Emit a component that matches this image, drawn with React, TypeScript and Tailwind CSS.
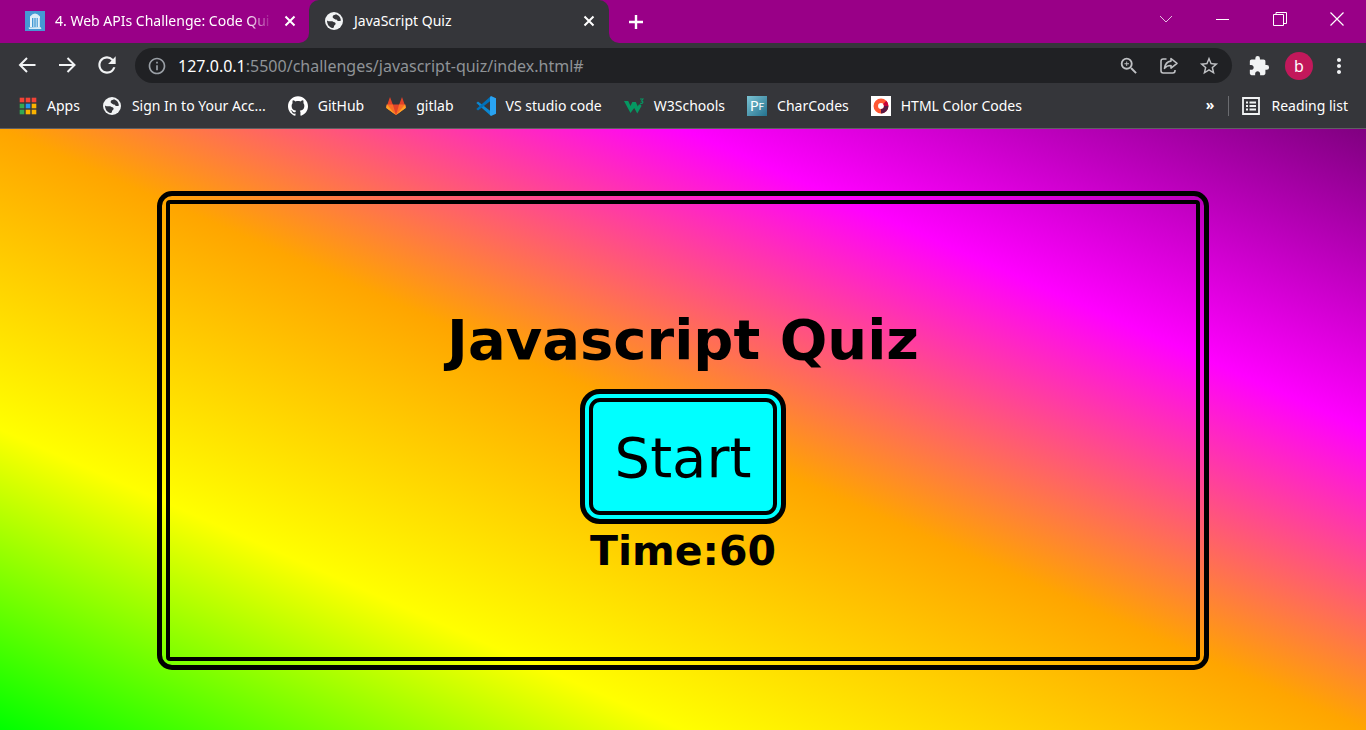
import React from 'react';
import { SiGithub } from 'react-icons/si';
import { MdExtension, MdMoreVert, MdStarBorder, MdRefresh, MdInfoOutline, MdZoomIn } from 'react-icons/md';

function Globe({ className }: { className?: string }) {
  return (
    <svg viewBox="0 0 20 20" className={className} aria-hidden="true">
      <circle cx="10" cy="10" r="9" fill="#f1f3f4" />
      <path d="M3 9.500C5 11 8 9.500 9.500 11c1.500 0 2.500 1 2 2.300-.3 1-1.500 1-1.500 2.200 0 .8-.5 1.500-1.500 1.500C5 16.500 3 13 3 9.500z" fill="#35363a" />
      <path d="M12 3.200c-1 1-2.500.5-3 1.500s-.5 2 .5 2.500 1.500 1.500 3 1.300c1 1.500 2 2 4.300 1.200C17 6.500 14.500 4 12 3.200z" fill="#35363a" />
    </svg>
  );
}

function CloseX({ className }: { className?: string }) {
  return (
    <svg viewBox="0 0 12 12" className={className} aria-hidden="true">
      <path d="M1.500 1.500l9 9M10.500 1.500l-9 9" stroke="#fff" strokeWidth="2" />
    </svg>
  );
}

function Bookmark({ icon, label }: { icon: React.ReactNode; label: string }) {
  return (
    <a href="#" className="flex shrink-0 items-center gap-[10px] whitespace-nowrap">
      {icon}
      <span>{label}</span>
    </a>
  );
}

const appColors = ['#f44336', '#f44336', '#f44336', '#34a853', '#2196f3', '#fbb300', '#34a853', '#fbb300', '#fbb300'];

function AppsIcon() {
  return (
    <svg viewBox="0 0 18 18" className="size-[18px]" aria-hidden="true">
      {appColors.map((c, i) => (
        <rect key={i} x={0.7 + (i % 3) * 6} y={0.7 + Math.floor(i / 3) * 6} width="4.6" height="4.6" fill={c} />
      ))}
    </svg>
  );
}

export default function App() {
  return (
    <div className="flex min-h-screen flex-col font-['Noto_Sans','Open_Sans',sans-serif] text-[14px] leading-5 text-white">
      <header className="bg-[#35363a]">
        <div className="flex h-[43px] bg-[#35363a]">
          <div className="flex w-[309px] items-center rounded-br-[10px] bg-[#990087] pb-[2px] pl-[25px]">
            <svg viewBox="0 0 20 20" className="size-5 shrink-0" aria-hidden="true">
              <rect width="20" height="20" fill="#4599d4" />
              <path d="M5 5.500Q10-.5 15 5.500V7H5zM3.500 16.500l12-.5 1 2H4z" fill="#d9ecf7" />
              <path d="M6 6.500V16M13.800 6.500V16" stroke="#e8f3fa" strokeWidth="2" />
              <path d="M8.800 7v9M11.200 7v9" stroke="#b9dcf1" strokeWidth="1.2" />
            </svg>
            <span className="ml-[10px] w-[218px] overflow-hidden whitespace-nowrap [mask-image:linear-gradient(to_right,black_88%,transparent)]">4. Web APIs Challenge: Code Qui</span>
            <button aria-label="Close first tab" className="ml-[11px]"><CloseX className="size-3" /></button>
          </div>
          <div className="flex w-[300px] bg-[#990087]">
            <div className="flex grow items-center rounded-t-[10px] bg-[#35363a] pb-[2px] pl-[15px]">
              <Globe className="size-5" />
              <span className="ml-[10px] grow">JavaScript Quiz</span>
              <button aria-label="Close tab" className="mr-[14px]"><CloseX className="size-3" /></button>
            </div>
          </div>
          <div className="flex grow rounded-bl-[10px] bg-[#990087]">
            <button aria-label="New tab" className="ml-[19px]">
              <svg viewBox="0 0 16 16" className="size-4" aria-hidden="true"><path d="M8 1v14M1 8h14" stroke="#fff" strokeWidth="2.4" /></svg>
            </button>
            <div className="ml-auto flex items-center gap-[43px] pr-[22px] pb-[6px]">
              <button aria-label="Search tabs"><svg viewBox="0 0 14 14" className="size-[14px]" fill="none" stroke="#e6c0e2" aria-hidden="true"><path d="M1 4l6 6 6-6" /></svg></button>
              <button aria-label="Minimize"><svg viewBox="0 0 14 14" className="size-[14px]" stroke="#fff" aria-hidden="true"><path d="M0 7.500h13" /></svg></button>
              <button aria-label="Restore"><svg viewBox="0 0 14 14" className="size-[14px]" fill="none" stroke="#fff" aria-hidden="true"><path d="M.5 2.500h10v11H.5zM3 2.500v-2h10.500v11H11" /></svg></button>
              <button aria-label="Close window"><svg viewBox="0 0 14 14" className="size-[14px]" stroke="#fff" strokeWidth="1.2" aria-hidden="true"><path d="M.5.5l13 13M13.500.5l-13 13" /></svg></button>
            </div>
          </div>
        </div>
        <div className="flex h-[45px] items-center pr-[15px] pl-[18px]">
          <button aria-label="Back"><svg viewBox="0 0 18 18" className="size-[18px]" fill="none" stroke="#f1f3f4" strokeWidth="2" aria-hidden="true"><path d="M17.500 8H2M9 1L2 8l7 7" /></svg></button>
          <button aria-label="Forward" className="ml-[22px]"><svg viewBox="0 0 18 18" className="size-[18px]" fill="none" stroke="#f1f3f4" strokeWidth="2" aria-hidden="true"><path d="M1 8h15.500M9.500 1l7 7-7 7" /></svg></button>
          <button aria-label="Reload" className="ml-[18px] pb-[2px]"><MdRefresh className="size-[26px] text-[#f1f3f4]" /></button>
          <div className="ml-[15px] flex h-[35px] grow items-center rounded-full bg-[#202124] pr-3 pl-3">
            <MdInfoOutline className="size-5 text-[#9aa0a6]" />
            <a href="#" className="ml-[11px] grow text-[16px] text-[#8f9397]"><span className="text-white">127.0.0.1</span>:5500/challenges/javascript-quiz/index.html#</a>
            <div className="flex items-center gap-[19px] text-[#bfc1c4]">
              <button aria-label="Zoom"><MdZoomIn className="size-[22px]" /></button>
              <button aria-label="Share">
                <svg viewBox="0 0 20 20" className="size-5" fill="none" stroke="currentColor" strokeWidth="1.6" aria-hidden="true">
                  <path d="M7.500 3H4.200Q2 3 2 5.200v9.600Q2 17 4.200 17h9.600q2.200 0 2.200-2.200V14" />
                  <path d="M12 2.500l6 4.800-6 4.800V9.500c-3 0-5 .8-6.500 2.800C6 8.500 8 5.500 12 5.100z" strokeLinejoin="round" />
                </svg>
              </button>
              <button aria-label="Bookmark page"><MdStarBorder className="size-[22px]" /></button>
            </div>
          </div>
          <button aria-label="Extensions" className="ml-4"><MdExtension className="size-[22px] text-[#f1f3f4]" /></button>
          <button aria-label="Profile" className="ml-[15px] size-7 rounded-full bg-[#c2185b] text-[16px]">b</button>
          <button aria-label="Menu" className="ml-[14px]"><MdMoreVert className="size-6 text-[#f1f3f4]" /></button>
        </div>
        <nav className="flex h-[41px] items-center gap-[22px] border-b border-[#5f6063] pr-[18px] pb-[5px] pl-[19px]">
          <Bookmark icon={<AppsIcon />} label="Apps" />
          <Bookmark icon={<Globe className="size-5" />} label="Sign In to Your Acc..." />
          <Bookmark icon={<SiGithub className="size-5" />} label="GitHub" />
          <Bookmark
            icon={
              <svg viewBox="0 0 20 20" className="size-5" aria-hidden="true">
                <path d="M4 1L.3 11.500 10 19l9.700-7.500L16 1l-2.800 7.500H6.800z" fill="#e24329" />
                <path d="M.8 8.500h6L10 19 .2 11.700zM19.200 8.500h-6L10 19l9.800-7.300z" fill="#fc6d26" />
                <path d="M.8 8.500L10 19 .2 12zM19.200 8.500L10 19l9.800-7z" fill="#fca326" />
              </svg>
            }
            label="gitlab"
          />
          <Bookmark
            icon={
              <svg viewBox="0 0 20 20" className="size-5" aria-hidden="true">
                <path d="M2 5.500L15 15.500V20L.3 7z" fill="#0b87d1" />
                <path d="M2 14.500L15 4.500V0L.3 13z" fill="#0070b8" />
                <path d="M15 0l5 2.300v15.400L15 20l-1-1.500v-17z" fill="#29a3f2" />
              </svg>
            }
            label="VS studio code"
          />
          <Bookmark
            icon={
              <svg viewBox="0 0 20 20" className="size-5" aria-hidden="true">
                <path d="M0 5h4.200l2.300 5 1.800-4h3.500l2 4.500 1-2h2l.7 1.500-4.200 7.500L10.200 12l-3.700 5z" fill="#059862" />
                <path d="M16 3h3l-1.500 2c2.300.3 1.600 3-1.300 2.200" fill="none" stroke="#059862" strokeWidth="1.1" />
              </svg>
            }
            label="W3Schools"
          />
          <Bookmark icon={<span className="flex size-5 items-center justify-center bg-linear-to-br from-[#7bc4d3] to-[#22728f] font-[Lato,sans-serif] text-[14px]">P<span className="text-[10px]">F</span></span>} label="CharCodes" />
          <Bookmark
            icon={
              <svg viewBox="0 0 20 20" className="size-5" aria-hidden="true">
                <rect width="20" height="20" fill="#fff" />
                <circle cx="10" cy="10" r="5.2" fill="none" stroke="#ff5733" strokeWidth="4.5" />
                <path d="M15.200 10a5.200 5.200 0 0 1-5.200 5.200" fill="none" stroke="#581845" strokeWidth="4.5" />
                <path d="M13.700 6.300A5.200 5.200 0 0 1 15.200 10" fill="none" stroke="#c70039" strokeWidth="4.5" />
              </svg>
            }
            label="HTML Color Codes"
          />
          <div className="ml-auto flex items-center">
            <button aria-label="More bookmarks" className="pb-[2px] font-bold">»</button>
            <span className="mr-[13px] ml-[14px] h-5 w-px bg-[#6b6c70]" />
            <button className="flex items-center gap-[11px] whitespace-nowrap">
              <svg viewBox="0 0 18 18" className="size-[18px]" fill="none" stroke="#f1f3f4" strokeWidth="1.8" aria-hidden="true">
                <path d="M1 1h16v16H1zM4 5.500h2M4 9h2M4 12.500h2M7.500 5.500H14M7.500 9H14M7.500 12.500H14" />
              </svg>
              Reading list
            </button>
          </div>
        </nav>
      </header>
      <main className="flex grow bg-[linear-gradient(to_top_right,lime,yellow,orange,magenta,purple)] px-[11.5%] pt-[62px] pb-[60px] font-[Verdana,'DejaVu_Sans',sans-serif] text-black">
        <section className="flex grow rounded-[15px] border-[5px] border-black p-1">
          <div className="flex grow flex-col items-center rounded-[4px] border-4 border-black pt-[102px]">
            <h1 className="text-[56px] leading-[68px] font-bold">Javascript Quiz</h1>
            <button className="mt-[15px] rounded-[20px] border-[5px] border-black bg-[cyan] p-1 text-[56px] leading-[68px]">
              <span className="block rounded-[11px] border-4 border-black px-[22px] pt-[22px] pb-[19px]">Start</span>
            </button>
            <p className="mt-[2px] text-[41px] leading-[50px] font-bold">Time:60</p>
          </div>
        </section>
      </main>
    </div>
  );
}
